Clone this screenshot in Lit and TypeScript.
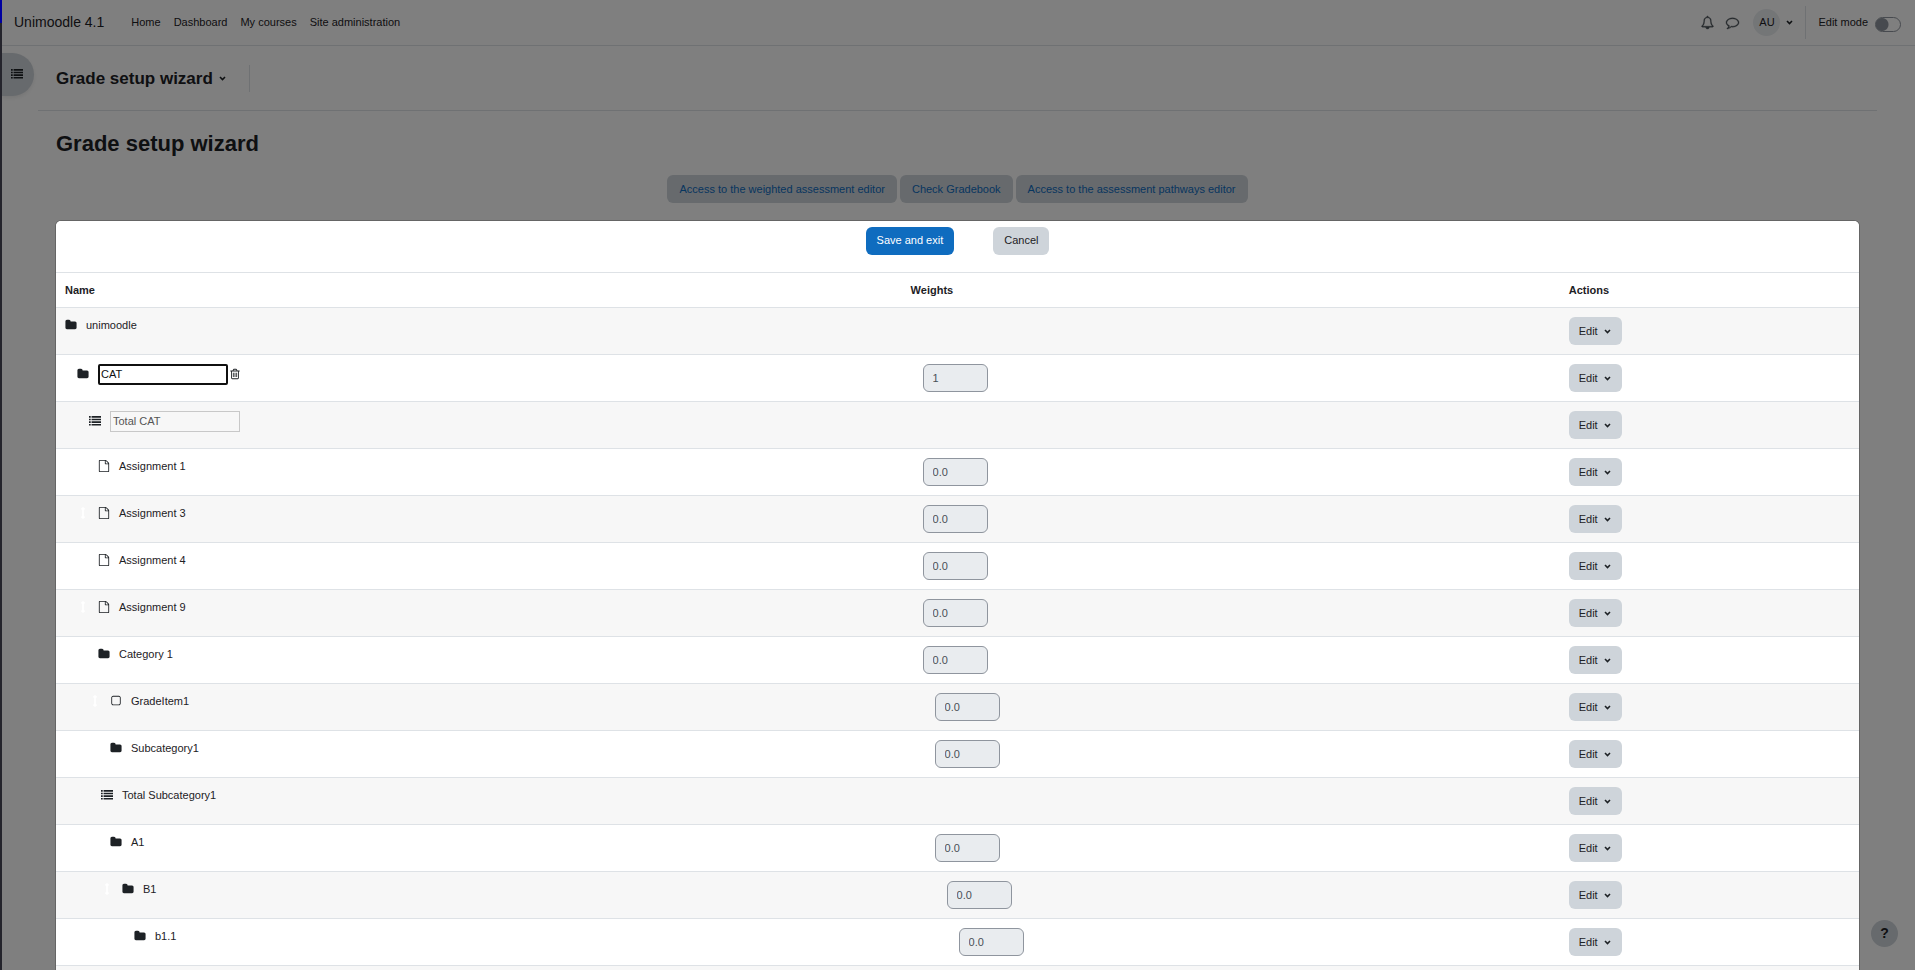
import { LitElement, html, css, svg, nothing } from "lit";
import { customElement, property } from "lit/decorators.js";

const PATHS: Record<string, string> = {
  folder:
    "M1728 608v704q0 92-66 158t-158 66h-1216q-92 0-158-66t-66-158v-960q0-92 66-158t158-66h320q92 0 158 66t66 158v32h672q92 0 158 66t66 158z",
  list:
    "M0 1330h256v250h-256zM0 940h256v250h-256zM0 550h256v250h-256zM0 160h256v250h-256zM384 1330h1408v250h-1408zM384 940h1408v250h-1408zM384 550h1408v250h-1408zM384 160h1408v250h-1408z",
  file:
    "M1596 380q28 28 48 76t20 88v1152q0 40-28 68t-68 28h-1344q-40 0-68-28t-28-68v-1600q0-40 28-68t68-28h896q40 0 88 20t76 48zm-444-244v376h376q-10-29-22-41l-313-313q-12-12-41-22zm384 1528v-1024h-416q-40 0-68-28t-28-68v-416h-768v1536h1280z",
  square:
    "M1312 256h-832q-66 0-113 47t-47 113v832q0 66 47 113t113 47h832q66 0 113-47t47-113v-832q0-66-47-113t-113-47zm288 160v832q0 119-84.5 203.5t-203.5 84.5h-832q-119 0-203.5-84.5t-84.5-203.5v-832q0-119 84.5-203.5t203.5-84.5h832q119 0 203.5 84.5t84.5 203.5z",
  trash:
    "M704 736v576q0 14-9 23t-23 9h-64q-14 0-23-9t-9-23v-576q0-14 9-23t23-9h64q14 0 23 9t9 23zm256 0v576q0 14-9 23t-23 9h-64q-14 0-23-9t-9-23v-576q0-14 9-23t23-9h64q14 0 23 9t9 23zm256 0v576q0 14-9 23t-23 9h-64q-14 0-23-9t-9-23v-576q0-14 9-23t23-9h64q14 0 23 9t9 23zm128 724v-948h-896v948q0 22 7 40.5t14.5 27 10.5 8.5h832q3 0 10.5-8.5t14.5-27 7-40.5zm-672-1076h448l-48-117q-7-9-17-11h-317q-10 2-17 11zm928 32v64q0 14-9 23t-23 9h-96v948q0 83-47 143.5t-113 60.5h-832q-66 0-113-58.5t-47-141.5v-952h-96q-14 0-23-9t-9-23v-64q0-14 9-23t23-9h309l70-167q15-37 54-63t79-26h320q40 0 79 26t54 63l70 167h309q14 0 23 9t9 23z",
  move:
    "M1216 320q0 26-19 45t-45 19h-128v1024h128q26 0 45 19t19 45-19 45l-256 256q-19 19-45 19t-45-19l-256-256q-19-19-19-45t19-45 45-19h128v-1024h-128q-26 0-45-19t-19-45 19-45l256-256q19-19 45-19t45 19l256 256q19 19 19 45z",
  bell:
    "M912 1696q0-16-16-16-59 0-101.5-42.5t-42.5-101.5q0-16-16-16t-16 16q0 73 51.5 124.5t124.5 51.5q16 0 16-16zm-666-288h1300q-266-300-266-832 0-51-24-105t-69-103-121.5-80.5-169.5-31.5-169.5 31.5-121.5 80.5-69 103-24 105q0 532-266 832zm1482 0q0 52-38 90t-90 38h-448q0 106-75 181t-181 75-181-75-75-181h-448q-52 0-90-38t-38-90q50-42 91-88t85-119.5 74.5-158.5 50-206 19.5-260q0-152 117-282.5t307-158.5q-8-19-8-39 0-40 28-68t68-28 68 28 28 68q0 20-8 39 190 28 307 158.5t117 282.5q0 139 19.5 260t50 206 74.5 158.5 85 119.5 91 88z",
  comment:
    "M896 384q-204 0-381.5 69.5t-282 187.5-104.5 255q0 112 71.5 213.5t201.5 175.5l87 50-27 96q-24 91-70 172 152-63 275-171l43-38 57 6q69 8 130 8 204 0 381.5-69.5t282-187.5 104.5-255-104.5-255-282-187.5-381.5-69.5zm896 512q0 174-120 321.5t-326 233-450 85.5q-70 0-145-8-198 175-460 242-49 14-114 22h-5q-15 0-27-10.5t-16-27.5v-1q-3-4-.5-12t2-10 4.5-9.5l6-9 7-8.5 8-9q7-8 31-34.5t34.5-38 31-39.5 32.5-51 27-59 26-76q-157-89-247.5-220t-90.5-281q0-174 120-321.5t326-233 450-85.5 450 85.5 326 233 120 321.5z",
};

const icon = (name: string, cls = "") => html`
  <svg class="icon ${cls}" viewBox="0 0 1792 1792" aria-hidden="true">
    ${svg`<path fill="currentColor" d=${PATHS[name]}></path>`}
  </svg>
`;

const chevron = () => html`
  <svg class="chevron" viewBox="0 0 7 5" aria-hidden="true">
    <path d="M1 1 3.5 3.5 6 1" fill="none" stroke="currentColor" stroke-width="1.6"></path>
  </svg>
`;

const shared = css`
  * {
    box-sizing: border-box;
  }
  button,
  input {
    font: inherit;
    margin: 0;
  }
  button {
    cursor: pointer;
    color: inherit;
  }
  .icon {
    display: block;
    flex: none;
    width: 12px;
    height: 12px;
  }
  .chevron {
    display: block;
    flex: none;
    width: 7px;
    height: 5px;
  }
`;

interface Row {
  name: string;
  icon: "folder" | "list" | "file" | "square";
  depth: number;
  movable?: boolean;
  weight?: string;
  field?: "editable" | "locked";
}

const ROWS: Row[] = [
  { name: "unimoodle", icon: "folder", depth: 0 },
  { name: "CAT", icon: "folder", depth: 1, weight: "1", field: "editable" },
  { name: "Total CAT", icon: "list", depth: 2, field: "locked" },
  { name: "Assignment 1", icon: "file", depth: 1, movable: true, weight: "0.0" },
  { name: "Assignment 3", icon: "file", depth: 1, movable: true, weight: "0.0" },
  { name: "Assignment 4", icon: "file", depth: 1, movable: true, weight: "0.0" },
  { name: "Assignment 9", icon: "file", depth: 1, movable: true, weight: "0.0" },
  { name: "Category 1", icon: "folder", depth: 1, movable: true, weight: "0.0" },
  { name: "GradeItem1", icon: "square", depth: 2, movable: true, weight: "0.0" },
  { name: "Subcategory1", icon: "folder", depth: 2, movable: true, weight: "0.0" },
  { name: "Total Subcategory1", icon: "list", depth: 3 },
  { name: "A1", icon: "folder", depth: 2, movable: true, weight: "0.0" },
  { name: "B1", icon: "folder", depth: 3, movable: true, weight: "0.0" },
  { name: "b1.1", icon: "folder", depth: 4, movable: true, weight: "0.0" },
];

const INDENT = 12;

@customElement("grade-table")
class GradeTable extends LitElement {
  @property({ attribute: false }) rows: Row[] = [];

  static styles = [
    shared,
    css`
      :host {
        display: block;
      }
      .table {
        width: 100%;
        table-layout: fixed;
        border-collapse: separate;
        border-spacing: 0;
        border-bottom: 1px solid #dee2e6;
        background: #fff;
      }
      .col-name {
        width: 46.9%;
      }
      .col-weights {
        width: 36.5%;
      }
      .head {
        padding: 9px 9px 8px;
        border-top: 1px solid #dee2e6;
        text-align: left;
        font-weight: 700;
      }
      .cell {
        padding: 9px;
        border-top: 1px solid #dee2e6;
        vertical-align: top;
      }
      .row:nth-child(odd) {
        background: #f7f7f7;
      }
      .name {
        display: flex;
        align-items: center;
        gap: 9px;
      }
      .name .icon {
        margin-bottom: 1px;
      }
      .move {
        color: #fff;
      }
      .edit-name {
        display: flex;
        align-items: center;
        gap: 1px;
      }
      .name-field {
        width: 130px;
        height: 21px;
        padding: 0 2px 2px;
        border: 1px solid #c8c8c8;
        border-radius: 0;
        background: transparent;
        color: #545454;
      }
      .name-field.editable {
        padding: 0 1px 1px;
        border: 2px solid #101010;
        border-radius: 2px;
        background: #fff;
        color: #101010;
        outline: none;
      }
      .trash {
        display: block;
        padding: 0;
        border: 0;
        background: none;
      }
      .weight {
        display: block;
        width: 65px;
        height: 28px;
        padding: 0 9px;
        border: 1px solid #8f959e;
        border-radius: 6px;
        background: #e9ecef;
        color: #495057;
      }
      .edit {
        display: flex;
        align-items: center;
        gap: 6px;
        height: 28px;
        padding: 0 11px 0 10px;
        border: 0;
        border-radius: 6px;
        background: #ced4da;
      }
    `,
  ];

  private name(row: Row) {
    if (!row.field) return html`<span>${row.name}</span>`;
    if (row.field === "locked")
      return html`<input class="name-field" type="text" aria-label="Name" disabled .value=${row.name} />`;
    return html`
      <span class="edit-name">
        <input class="name-field editable" type="text" aria-label="Name" .value=${row.name} />
        <button class="trash" type="button" aria-label="Delete">${icon("trash")}</button>
      </span>
    `;
  }

  render() {
    return html`
      <table class="table">
        <colgroup>
          <col class="col-name" />
          <col class="col-weights" />
          <col />
        </colgroup>
        <thead>
          <tr>
            <th class="head" scope="col">Name</th>
            <th class="head" scope="col">Weights</th>
            <th class="head" scope="col">Actions</th>
          </tr>
        </thead>
        <tbody>
          ${this.rows.map(
            (row) => html`
              <tr class="row">
                <td class="cell">
                  <div class="name" style="padding-left:${row.depth * INDENT}px">
                    ${row.movable ? icon("move", "move") : nothing} ${icon(row.icon)} ${this.name(row)}
                  </div>
                </td>
                <td class="cell">
                  ${row.weight
                    ? html`<input
                        class="weight"
                        style="margin-left:${row.depth * INDENT}px"
                        type="text"
                        aria-label="Weight of ${row.name}"
                        disabled
                        .value=${row.weight}
                      />`
                    : nothing}
                </td>
                <td class="cell">
                  <button class="edit" type="button">Edit ${chevron()}</button>
                </td>
              </tr>
            `
          )}
        </tbody>
      </table>
    `;
  }
}

@customElement("app-root")
class AppRoot extends LitElement {
  static styles = [
    shared,
    css`
      :host {
        display: block;
        position: relative;
        height: 100vh;
        overflow: hidden;
        background: #fff;
        color: #1d2125;
        font: 11px/17px "Liberation Sans", Arial, sans-serif;
      }
      .page {
        padding-left: 2px;
      }
      .navbar {
        display: flex;
        align-items: center;
        height: 46px;
        padding: 0 14px 0 12px;
        border-bottom: 1px solid #dee2e6;
      }
      .brand {
        margin-right: 27px;
        color: inherit;
        font-size: 14px;
        text-decoration: none;
      }
      .links {
        display: flex;
        flex: 1;
        gap: 13px;
      }
      .link {
        color: inherit;
        text-decoration: none;
      }
      .tools {
        display: flex;
        align-items: center;
      }
      .tool {
        display: block;
        padding: 0;
        margin-right: 12px;
        border: 0;
        background: none;
        color: #495057;
      }
      .tool .icon {
        width: 13px;
        height: 13px;
        overflow: visible;
        stroke: currentColor;
        stroke-width: 50;
      }
      .user {
        display: flex;
        align-items: center;
        gap: 6px;
        margin-left: 2px;
        padding: 0;
        border: 0;
        background: none;
      }
      .avatar {
        display: grid;
        place-items: center;
        width: 27px;
        height: 27px;
        border-radius: 50%;
        background: #e9ecef;
      }
      .edit-mode {
        display: flex;
        align-items: center;
        gap: 7px;
        height: 33px;
        margin-left: 12px;
        padding-left: 12px;
        border-left: 1px solid #dee2e6;
      }
      .switch {
        appearance: none;
        display: block;
        width: 26px;
        height: 15px;
        margin-top: 3px;
        border: 1px solid #8f959e;
        border-radius: 8px;
        background: radial-gradient(circle at 6px 50%, #8f959e 6px, transparent 7px) #fff;
      }
      .header {
        display: flex;
        align-items: flex-start;
        margin: 0 38px 0 0;
        padding-top: 7px;
      }
      .drawer {
        display: grid;
        place-items: center;
        width: 32px;
        height: 43px;
        padding: 0 6px 2px 4px;
        border: 0;
        border-radius: 0 22px 22px 0;
        background: #ced4da;
        box-shadow: 0 2px 4px rgba(0, 0, 0, 0.08);
      }
      .context {
        display: flex;
        flex: 1;
        align-items: center;
        height: 58px;
        margin-left: 4px;
        padding: 0 18px 6px;
        border-bottom: 1px solid #dee2e6;
      }
      .course {
        display: flex;
        align-items: center;
        gap: 6px;
        height: 27px;
        padding-right: 23px;
        border-right: 1px solid #dee2e6;
      }
      .course-name {
        margin: 0;
        font-size: 17px;
        line-height: 20px;
      }
      .main {
        padding: 19px 56px 0 54px;
      }
      .title {
        margin: 0;
        font-size: 22px;
        line-height: 27px;
      }
      .shortcuts {
        display: flex;
        justify-content: center;
        gap: 3px;
        padding-top: 18px;
      }
      .shortcut {
        height: 28px;
        padding: 0 12px;
        border-radius: 6px;
        background: #ced4da;
        color: #0f6cbf;
        line-height: 28px;
        text-decoration: none;
      }
      .help {
        position: absolute;
        right: 17px;
        bottom: 23px;
        width: 27px;
        height: 27px;
        padding: 0;
        border: 0;
        border-radius: 50%;
        background: #ced4da;
        font-size: 14px;
        font-weight: 700;
      }
      .backdrop {
        position: absolute;
        inset: 0;
        background: rgba(0, 0, 0, 0.5);
      }
      .edge {
        position: absolute;
        inset: 0 auto 0 0;
        width: 2px;
        background: linear-gradient(#0000a0 23px, #24242c 23px);
      }
      .dialog {
        position: absolute;
        inset: 220px 55px 0;
        display: flex;
        flex-direction: column;
        border: 1px solid rgba(0, 0, 0, 0.2);
        border-bottom: 0;
        border-radius: 6px 6px 0 0;
        background: #f7f7f7;
        background-clip: padding-box;
      }
      .commands {
        display: flex;
        justify-content: center;
        gap: 39px;
        padding: 6px 0 17px;
        border-radius: 5px 5px 0 0;
        background: #fff;
      }
      .command {
        height: 28px;
        padding: 0 11px 1px;
        border: 0;
        border-radius: 6px;
        background: #ced4da;
      }
      .primary {
        background: #0f6cbf;
        color: #fff;
      }
    `,
  ];

  render() {
    return html`
      <div class="page">
        <nav class="navbar">
          <a class="brand" href="#">Unimoodle 4.1</a>
          <div class="links">
            ${["Home", "Dashboard", "My courses", "Site administration"].map(
              (label) => html`<a class="link" href="#">${label}</a>`
            )}
          </div>
          <div class="tools">
            <button class="tool" type="button" aria-label="Notifications">${icon("bell")}</button>
            <button class="tool" type="button" aria-label="Messages">${icon("comment")}</button>
            <button class="user" type="button" aria-label="User menu">
              <span class="avatar">AU</span>${chevron()}
            </button>
            <div class="edit-mode">
              <label for="edit-mode">Edit mode</label>
              <input id="edit-mode" class="switch" type="checkbox" role="switch" />
            </div>
          </div>
        </nav>
        <header class="header">
          <button class="drawer" type="button" aria-label="Open course index">${icon("list")}</button>
          <div class="context">
            <div class="course">
              <h2 class="course-name">Grade setup wizard</h2>
              ${chevron()}
            </div>
          </div>
        </header>
        <main class="main">
          <h1 class="title">Grade setup wizard</h1>
          <div class="shortcuts">
            <a class="shortcut" href="#">Access to the weighted assessment editor</a>
            <a class="shortcut" href="#">Check Gradebook</a>
            <a class="shortcut" href="#">Access to the assessment pathways editor</a>
          </div>
        </main>
        <button class="help" type="button" aria-label="Help">?</button>
      </div>
      <div class="backdrop"></div>
      <div class="edge"></div>
      <section class="dialog" role="dialog" aria-label="Grade setup wizard">
        <div class="commands">
          <button class="command primary" type="button">Save and exit</button>
          <button class="command" type="button">Cancel</button>
        </div>
        <grade-table .rows=${ROWS}></grade-table>
      </section>
    `;
  }
}
